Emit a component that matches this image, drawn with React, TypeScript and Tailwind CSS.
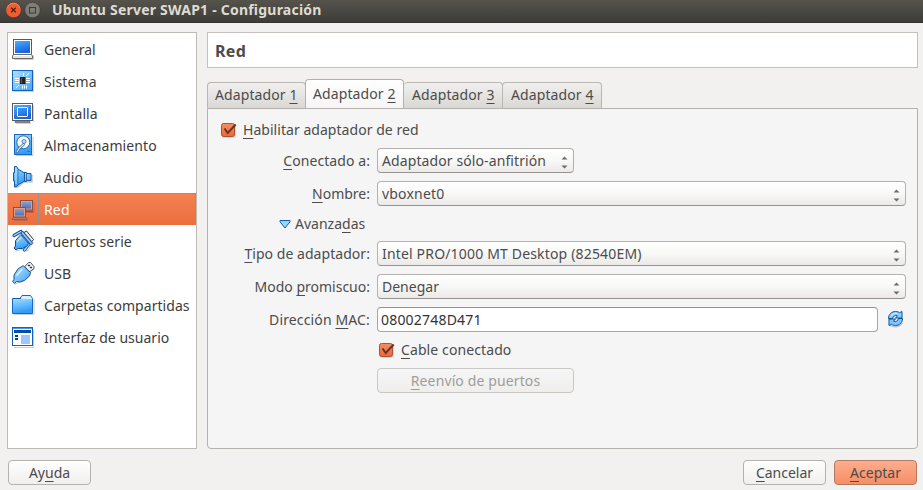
import type { ReactNode } from "react";

const FONT = "font-['Noto_Sans','Open_Sans',sans-serif]";

/** Label whose mnemonic letter is wrapped in ampersands, e.g. "Ay&u&da". */
function Mnemonic({ text, className = "" }: { text: string; className?: string }) {
  const [before, key, after] = text.split("&");
  return (
    <span className={`whitespace-pre ${className}`}>
      {before}
      {key && (
        <span className="underline decoration-1 underline-offset-[3px] [text-decoration-skip-ink:none]">{key}</span>
      )}
      {after}
    </span>
  );
}

function Icon({ children }: { children: ReactNode }) {
  return (
    <svg width="24" height="24" viewBox="0 0 24 24" className="shrink-0">
      {children}
    </svg>
  );
}

function Gradients() {
  return (
    <svg width="0" height="0" className="absolute">
      <defs>
        <linearGradient id="screen" x1="0" y1="0" x2="0.4" y2="1">
          <stop offset="0" stopColor="#4bb0ff" />
          <stop offset="1" stopColor="#1b62dc" />
        </linearGradient>
        <linearGradient id="sky" x1="0" y1="0" x2="1" y2="1">
          <stop offset="0" stopColor="#b4e2ff" />
          <stop offset="1" stopColor="#3fa4f5" />
        </linearGradient>
        <linearGradient id="folder" x1="0" y1="0" x2="0.3" y2="1">
          <stop offset="0" stopColor="#a4dcff" />
          <stop offset="1" stopColor="#2f9cf8" />
        </linearGradient>
        <linearGradient id="muted" x1="0" y1="0" x2="0" y2="1">
          <stop offset="0" stopColor="#8f9cc8" />
          <stop offset="1" stopColor="#566fb4" />
        </linearGradient>
        <linearGradient id="check" x1="0" y1="0" x2="0" y2="1">
          <stop offset="0" stopColor="#f58d64" />
          <stop offset="1" stopColor="#e9683c" />
        </linearGradient>
      </defs>
    </svg>
  );
}

const icons = {
  general: (
    <Icon>
      <path d="M3 22.500h19.500v-4M20.500 4v13" stroke="#c9c9c9" fill="none" />
      <rect x="2.500" y="2.500" width="18" height="15" fill="#fff" stroke="#5b5b5b" />
      <rect x="4" y="4" width="15" height="12" fill="url(#screen)" />
      <path d="M2.500 17.500h18l1 1.500v2.500h-20v-2.500z" fill="#e6e6e6" stroke="#6a6a6a" />
      <path d="M3 18.500h17" stroke="#fff" />
    </Icon>
  ),
  system: (
    <Icon>
      <rect x="2" y="2" width="21" height="21" fill="#cfd3d8" />
      <rect x="1.500" y="1.500" width="20" height="20" fill="url(#sky)" stroke="#1562bd" />
      <path
        d="M4 9.500h4M4 11.500h4M4 13.500h4M15 9.500h4M15 11.500h4M15 13.500h4M12.500 4v3M11.500 16.500v3M13.500 16.500v3M15.500 16.500v3M15 7l3.500-3M5 19l3-3"
        stroke="#fff"
        fill="none"
      />
      <rect x="9" y="8" width="5.500" height="7" fill="#222" />
      <path d="M10.500 9v5" stroke="#5c5c5c" />
    </Icon>
  ),
  display: (
    <Icon>
      <path d="M5 22.500h15M22.500 4v17" stroke="#d0d0d0" />
      <rect x="1.500" y="2.500" width="20" height="17" fill="#fff" stroke="#5b5b5b" />
      <rect x="3" y="4" width="17" height="14" fill="url(#screen)" />
      <rect x="6.500" y="6.500" width="10" height="9" fill="none" stroke="#fff" rx=".5" />
      <path d="M4 20.500h15v1h-15z" fill="#ddd" stroke="#666" strokeWidth=".8" />
    </Icon>
  ),
  storage: (
    <Icon>
      <path d="M5 22.500h17V4" stroke="#c4c8cc" fill="none" />
      <rect x="3.500" y="1.500" width="17" height="20" fill="url(#folder)" stroke="#1769c4" />
      <circle cx="12.300" cy="9.300" r="6.500" fill="#f5f9fd" stroke="#285889" strokeWidth=".9" />
      <circle cx="13" cy="8.500" r="2" fill="#b7dfff" stroke="#2e6fb0" strokeWidth=".8" />
      <path d="M6 19l2.500-4 4-3.500" stroke="#235a96" strokeWidth="2.400" strokeLinecap="round" fill="none" />
      <path d="M6 19l2.500-4 4-3.500" stroke="#fff" strokeWidth="1.100" strokeLinecap="round" fill="none" />
      <path d="M16.500 18.500h2" stroke="#1769c4" />
    </Icon>
  ),
  audio: (
    <Icon>
      <path d="M6 22.500l7-5.500h8v-7" stroke="#bfc5cc" strokeWidth="1.500" fill="none" />
      <path d="M13 7.500h2.500v1h4.500v7h-4.500v1H13z" fill="url(#sky)" stroke="#175a9f" />
      <path d="M3.500 1.500h2l1.500 2.500 6.500 4v8l-6.500 4-1.500 2h-2v-6h-1v-8.500h1z" fill="url(#folder)" stroke="#175a9f" />
      <path d="M7 4.500v15" stroke="#2673c0" strokeWidth=".9" />
      <path d="M5 4v15" stroke="#c4e7ff" strokeWidth=".9" />
      <path d="M15.500 9v7" stroke="#175a9f" strokeWidth=".8" />
    </Icon>
  ),
  network: (
    <Icon>
      <path d="M11 14.500h12V4" stroke="#d26b45" fill="none" />
      <rect x="9.500" y="2.500" width="12" height="9.500" fill="#d7a08d" stroke="#8c4f3c" />
      <rect x="11" y="4" width="9" height="6.500" fill="url(#muted)" />
      <path d="M10 13.500h12.500" stroke="#8c4f3c" strokeWidth="1.500" />
      <path d="M3 22.500h13.500v-3" stroke="#cc6743" fill="none" />
      <rect x="2.500" y="9.500" width="12" height="9.500" fill="#d7a08d" stroke="#8c4f3c" />
      <rect x="4" y="11" width="9" height="6.500" fill="url(#muted)" />
      <path d="M1.500 20h14v1.500h-14z" fill="#c99787" stroke="#8c4f3c" strokeWidth=".8" />
    </Icon>
  ),
  serial: (
    <Icon>
      <g strokeLinecap="round" strokeLinejoin="round">
        <path d="M5 22l8-2 4 2 3-6 3-2" stroke="#c4c9ce" fill="none" />
        <path d="M13 3.500l2.500-1.500 7 8.500-2 2.500z" fill="#f1f1f1" stroke="#333" />
        <path d="M3 6.500l7-4M13.500 21l4.500-6" stroke="#174f91" strokeWidth="3.200" />
        <path d="M3 6.500l7-4M13.500 21l4.500-6" stroke="#b5deff" strokeWidth="1.400" />
        <path d="M11.500 4l8.500 10" stroke="#174f91" strokeWidth="3.600" />
        <path d="M11.500 4l8.500 10" stroke="#8dcbff" strokeWidth="1.800" />
        <path d="M10 6l7.500 8.500-1.500 2.500-4.500 2.500H7l-2 1.500-2-2 1.500-2V12z" fill="url(#folder)" stroke="#174f91" />
        <path d="M6.500 12.500l3.500-4" stroke="#dff3ff" />
      </g>
    </Icon>
  ),
  usb: (
    <Icon>
      <g strokeLinecap="round" strokeLinejoin="round">
        <path d="M4 23l8-3 5-7 6-5" stroke="#bfc5cc" fill="none" />
        <path d="M14 5.500l3.500-4h2l3.500 4v2l-4 3z" fill="#f1f1f1" stroke="#555" />
        <path d="M17.500 4.500h1M19.500 6.500h1" stroke="#333" strokeWidth="1.400" />
        <path d="M12.500 5l7 6.500-1 3.500-5 4.500-5 1.500-3-.5-2 2-2-2 1.500-2L3 14l4-6z" fill="url(#sky)" stroke="#174f91" />
        <path d="M6 14l5-5.500" stroke="#dff3ff" strokeWidth="1.500" />
      </g>
    </Icon>
  ),
  folder: (
    <Icon>
      <path d="M3 21.500h20V6" stroke="#c9ced4" fill="none" />
      <path d="M1.500 5.500H9l2-3h8.500l2 3v15h-20z" fill="#d5efff" stroke="#1769c4" />
      <rect x="2" y="6" width="19" height="14" fill="url(#folder)" />
      <path d="M2 5.500h8" stroke="#0f58b2" />
    </Icon>
  ),
  ui: (
    <Icon>
      <path d="M3 22.500h19.500V4" stroke="#c9ced4" fill="none" />
      <rect x="1.500" y="2.500" width="20" height="18" fill="#fff" stroke="#0e63bd" />
      <path d="M2 3h19v1H2z" fill="#4b9ae8" />
      <path d="M3 5h17v3H3z" fill="#0a4da6" />
      <path d="M4 10h3v2H4zM4 13h3v2H4z" fill="#0a3e94" />
      <path d="M10 10h9v9h-9z" fill="#9cc6ff" />
    </Icon>
  ),
};

const sections = [
  { name: "General", icon: icons.general, track: "" },
  { name: "Sistema", icon: icons.system, track: "tracking-[0.1px]" },
  { name: "Pantalla", icon: icons.display, track: "tracking-[0.1px]" },
  { name: "Almacenamiento", icon: icons.storage, track: "tracking-[0.1px]" },
  { name: "Audio", icon: icons.audio, track: "tracking-[0.15px]" },
  { name: "Red", icon: icons.network, track: "tracking-[0.15px]" },
  { name: "Puertos serie", icon: icons.serial, track: "tracking-[0.1px]" },
  { name: "USB", icon: icons.usb, track: "" },
  { name: "Carpetas compartidas", icon: icons.folder, track: "tracking-[0.05px]" },
  { name: "Interfaz de usuario", icon: icons.ui, track: "tracking-[0.02px]" },
];

function TitleBar() {
  return (
    <header className="flex h-[23px] shrink-0 items-center border-b border-[#34332f] bg-linear-to-b from-[#55534c] to-[#3d3c38] pl-[6px]">
      <svg width="36" height="18" viewBox="0 0 36 18" className="mb-[3px] shrink-0">
        <circle cx="7.500" cy="9" r="7.800" fill="#ee5e32" stroke="#33322e" strokeWidth=".6" />
        <path d="M1.500 6.500a6.400 6.400 0 0 1 12 0" stroke="#f49272" fill="none" strokeWidth=".8" />
        <path d="M5.200 6.700l4.600 4.600M9.800 6.700l-4.600 4.600" stroke="#45261c" strokeWidth="1.300" />
        <circle cx="26.500" cy="9" r="7.800" fill="#7e7d76" stroke="#33322e" strokeWidth=".6" />
        <rect x="23.500" y="6.500" width="6" height="5.500" fill="none" stroke="#3c3b37" />
      </svg>
      <h1 className="mb-[3px] ml-[10px] text-[14px] leading-5 font-bold tracking-[0.22px] whitespace-pre text-[#dfdbd2]">
        Ubuntu Server SWAP1 - Configuración
      </h1>
    </header>
  );
}

function Sidebar() {
  return (
    <nav className="flex h-[417px] w-[190px] shrink-0 flex-col border border-[#bdb9b3] bg-white">
      {sections.map(({ name, icon, track }) => {
        const active = name === "Red";
        return (
          <div
            key={name}
            className={`flex h-8 items-center pl-[3px] ${
              active
                ? "border-t border-[#b38b78] bg-linear-to-b from-[#f58050] to-[#eb6e3d] text-white"
                : "text-[#3c3c3c]"
            }`}
          >
            {icon}
            <div
              className={`ml-[3px] flex flex-1 items-center self-stretch pl-[5px] ${
                active ? "border border-t-0 border-dotted border-[#8f8f92] pt-px" : "border-l border-transparent pt-[2px]"
              }`}
            >
              <span className={`whitespace-pre ${track}`}>{name}</span>
            </div>
          </div>
        );
      })}
    </nav>
  );
}

function Tabs() {
  const idle =
    "h-[26px] border border-b-0 border-[#b9b5b0] bg-linear-to-b from-[#f1f0ef] to-[#dad8d5] pt-[2px] rounded-t-[4px]";
  return (
    <div className="flex h-[29px] items-end tracking-[0.1px]">
      <div className={`w-[99px] pl-[7px] ${idle}`}>
        <Mnemonic text="Adaptador &1&" />
      </div>
      <div className="-mb-px -ml-px h-[30px] w-[99px] rounded-t-[4px] border border-b-0 border-[#b5afa8] bg-linear-to-b from-white to-[#f5f5f5] pt-[4px] pl-[7px]">
        <Mnemonic text="Adaptador &2&" />
      </div>
      <div className={`w-[99px] border-l-0 pl-[8px] ${idle}`}>
        <Mnemonic text="Adaptador &3&" />
      </div>
      <div className={`-ml-px w-[100px] pl-[8px] ${idle}`}>
        <Mnemonic text="Adaptador &4&" />
      </div>
    </div>
  );
}

function Checkbox() {
  return (
    <svg width="18" height="18" viewBox="0 0 18 18" className="shrink-0">
      <rect x="2" y="3" width="14" height="14" rx="2" fill="#d9d6d4" />
      <rect x="1.500" y="2.500" width="13" height="13" rx="2" fill="url(#check)" stroke="#b2512e" />
      <path d="M4.500 7.500l3.200 4.500 8-8.500" fill="none" stroke="#69321f" strokeWidth="2" />
    </svg>
  );
}

function Row({
  label,
  gap = "",
  track = "",
  children,
}: {
  label: string;
  gap?: string;
  track?: string;
  children: ReactNode;
}) {
  return (
    <div className={`flex h-[25px] items-center ${gap}`}>
      <div className="flex w-[162px] shrink-0 justify-end">
        <Mnemonic text={label} className={track} />
      </div>
      {children}
    </div>
  );
}

function Combo({ value, width, track = "" }: { value: string; width: string; track?: string }) {
  return (
    <div
      className={`ml-[7px] flex h-[25px] items-center justify-between rounded-[4px] border border-[#b5b2ae] border-b-[#96938f] bg-linear-to-b from-white via-[#f8f8f7] to-[#ebeae8] pr-[5px] pl-[4px] ${width}`}
    >
      <span className={`whitespace-pre ${track}`}>{value}</span>
      <svg width="7" height="15" viewBox="0 0 7 15" className="mt-[3px]">
        <path d="M.5 4.500L3.500 1.500l3 3zM.5 10.500h6l-3 3z" fill="#6b6b6b" />
      </svg>
    </div>
  );
}

function Button({ text, className }: { text: string; className: string }) {
  return (
    <button className={`flex items-center justify-center rounded-[4px] border ${className}`}>
      <Mnemonic text={text} />
    </button>
  );
}

function RefreshIcon() {
  return (
    <svg width="18" height="18" viewBox="0 0 18 18" className="mb-px ml-[9px] shrink-0">
      <path d="M3 15.500c3 2 10 2 12.500-2.500" stroke="#bcc3ca" strokeWidth="1.500" fill="none" />
      <path
        d="M1.500 8.500C1.500 4 5 1.500 8.500 1.500c2 0 3 .5 4 1.200l2.500-1.200v6.500H8.500l2-2.200C8 5 6 6 5.500 8.500z"
        fill="#8bd0ff"
        stroke="#0e509d"
      />
      <path
        d="M15.500 8.500c0 4.500-3.500 7-7 7-2 0-3-.5-4-1.200L2 15.500V9h6.500l-2 2.200c2.500.8 4.500-.2 5-2.700z"
        fill="#7cc6fa"
        stroke="#0e509d"
      />
      <path d="M4 5.500c1.500-2 4-2.500 6-2" stroke="#d9f1ff" fill="none" />
    </svg>
  );
}

function AdapterPanel() {
  return (
    <section className="flex h-[341px] flex-col rounded-b-[4px] border border-[#b5b1ac] bg-[#f5f5f5]">
      <div className="mt-[11px] flex h-5 items-center pl-[12px]">
        <Checkbox />
        <Mnemonic text="&H&abilitar adaptador de red" className="ml-[5px] tracking-[0.04px]" />
      </div>
      <Row label="&C&onectado a:" gap="mt-[8px]" track="tracking-[0.08px]">
        <Combo value="Adaptador sólo-anfitrión" width="w-[197px]" track="tracking-[0.1px]" />
      </Row>
      <Row label="&N&ombre:" gap="mt-[8px]">
        <Combo value="vboxnet0" width="w-[529px]" track="tracking-[0.2px]" />
      </Row>
      <div className="mt-[8px] flex h-5 items-center pl-[71px]">
        <svg width="12" height="11" viewBox="0 0 12 11">
          <path d="M1 1.500h10v1.300L6 9 1 2.800z" fill="#9bd6ff" stroke="#0d5db5" strokeLinejoin="round" />
        </svg>
        <Mnemonic text="Avanza&d&as" className="ml-[4px]" />
      </div>
      <Row label="&T&ipo de adaptador:" gap="mt-[7px]" track="tracking-[0.05px]">
        <Combo value="Intel PRO/1000 MT Desktop (82540EM)" width="w-[529px]" track="tracking-[0.17px]" />
      </Row>
      <Row label="Modo &p&romiscuo:" gap="mt-[8px]">
        <Combo value="Denegar" width="w-[529px]" />
      </Row>
      <Row label="Dirección &M&AC:" gap="mt-[8px]" track="tracking-[0.14px]">
        <div className="ml-[7px] flex h-[25px] w-[501px] items-center rounded-[4px] border border-[#aaa6a1] border-t-[#96928d] bg-white pl-[3px] tracking-[0.2px] text-[#333]">
          08002748D471
        </div>
        <RefreshIcon />
      </Row>
      <div className="mt-[8px] flex h-5 items-center pl-[170px]">
        <Checkbox />
        <Mnemonic text="&C&able conectado" className="ml-[5px] tracking-[0.1px]" />
      </div>
      <Button
        text="&R&eenvío de puertos"
        className="mt-[8px] ml-[169px] h-[25px] w-[197px] border-[#cac8c5] bg-linear-to-b from-[#f6f6f6] to-[#efeeed] tracking-[0.12px] text-[#9d9d9c]"
      />
    </section>
  );
}

export default function App() {
  return (
    <div
      className={`flex h-[490px] w-[923px] flex-col overflow-hidden bg-[#f2f1f0] text-[14px] leading-5 text-[#4c4c4c] ${FONT}`}
    >
      <Gradients />
      <TitleBar />
      <main className="mt-[9px] ml-[7px] flex gap-[10px]">
        <Sidebar />
        <div className="flex w-[711px] flex-col">
          <h2 className="mb-[11px] flex h-[36px] items-center border border-[#c4c1bd] bg-white pt-px pl-[7px] text-[16px] font-bold tracking-[0.3px]">
            Red
          </h2>
          <Tabs />
          <AdapterPanel />
        </div>
      </main>
      <footer className="mt-[11px] flex pl-[8px]">
        <Button text="Ay&u&da" className="h-[25px] w-[83px] border-[#b5b2ae] bg-linear-to-b from-white to-[#f0efed]" />
        <Button
          text="&C&ancelar"
          className="ml-[652px] h-[25px] w-[83px] border-[#b5b2ae] bg-linear-to-b from-white to-[#f0efed]"
        />
        <Button
          text="&A&ceptar"
          className="ml-[8px] h-[25px] w-[83px] border-[#b07a64] bg-linear-to-b from-[#ffad8c] to-[#f58e66]"
        />
      </footer>
    </div>
  );
}
